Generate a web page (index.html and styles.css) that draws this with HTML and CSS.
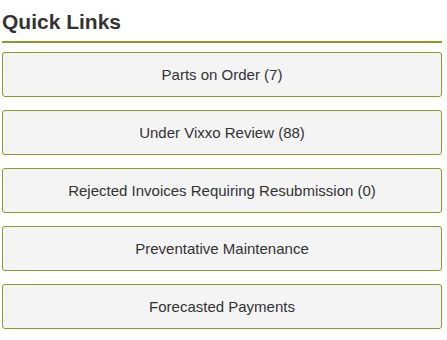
FILE: index.html
```html
<!DOCTYPE html>
<html lang="en">
<head>
    <meta charset="UTF-8">
    <title>Quick Links</title>
    <link rel="stylesheet" href="styles.css">
</head>
<body>
    <div class="quickLinks">
        <h2 class="title">Quick Links</h2>
        <ul class="linkList">
            <li><a href="">Parts on Order (7)</a></li>
            <li><a href="">Under Vixxo Review (88)</a></li>
            <li><a href="">Rejected Invoices Requiring Resubmission (0)</a></li>
            <li><a href="">Preventative Maintenance</a></li>
            <li><a href="">Forecasted Payments</a></li>
        </ul>
    </div>
</body>
</html>
```

FILE: styles.css
```css
*{
    margin:0;
    padding:0;
}
body{
    background:#fff;
    font-family:"Liberation Sans", Arial, sans-serif;
    color:#333;
}
.quickLinks{
    width:440px;
    margin-left:2px;
    padding-top:10px;
}
.quickLinks .title{
    font-size:21px;
    line-height:24px;
    font-weight:bold;
    color:#333;
    padding-bottom:7px;
    border-bottom:2px solid #8a9a2b;
}
.quickLinks .linkList{
    list-style:none;
    display:flex;
    flex-direction:column;
    gap:13px;
    margin-top:9px;
}
.quickLinks .linkList a{
    display:block;
    height:43px;
    line-height:43px;
    border:1px solid #8a9a2b;
    border-radius:3px;
    background:#f4f4f4;
    color:#333;
    font-size:15px;
    text-align:center;
    text-decoration:none;
}
```
